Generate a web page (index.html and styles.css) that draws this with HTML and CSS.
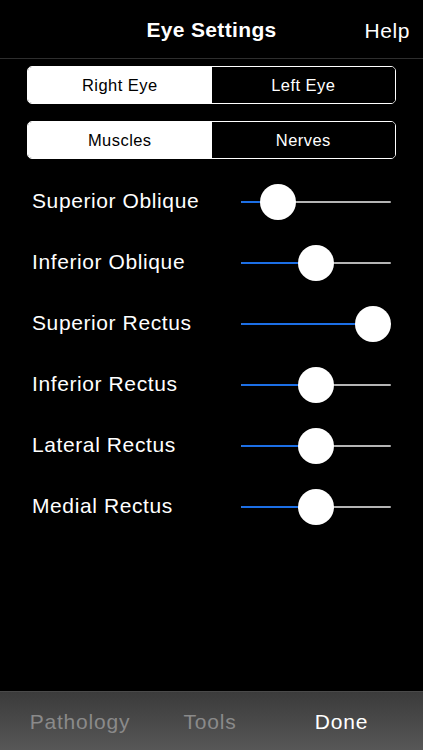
FILE: index.html
```html
<!DOCTYPE html>
<html>
<head>
<meta charset="utf-8">
<link rel="stylesheet" href="styles.css">
</head>
<body>
<div class="screen">
  <header class="navbar">
    <div class="nav-title">Eye Settings</div>
    <div class="nav-right">Help</div>
  </header>
  <main class="content">
    <div class="segmented">
      <div class="seg selected">Right Eye</div>
      <div class="seg">Left Eye</div>
    </div>
    <div class="segmented">
      <div class="seg selected">Muscles</div>
      <div class="seg">Nerves</div>
    </div>
    <div class="rows">
      <div class="row">
        <div class="label">Superior Oblique</div>
        <div class="slider" style="--v:0.167"><div class="fill"></div><div class="thumb"></div></div>
      </div>
      <div class="row">
        <div class="label">Inferior Oblique</div>
        <div class="slider" style="--v:0.5"><div class="fill"></div><div class="thumb"></div></div>
      </div>
      <div class="row">
        <div class="label">Superior Rectus</div>
        <div class="slider" style="--v:1"><div class="fill"></div><div class="thumb"></div></div>
      </div>
      <div class="row">
        <div class="label">Inferior Rectus</div>
        <div class="slider" style="--v:0.5"><div class="fill"></div><div class="thumb"></div></div>
      </div>
      <div class="row">
        <div class="label">Lateral Rectus</div>
        <div class="slider" style="--v:0.5"><div class="fill"></div><div class="thumb"></div></div>
      </div>
      <div class="row">
        <div class="label">Medial Rectus</div>
        <div class="slider" style="--v:0.5"><div class="fill"></div><div class="thumb"></div></div>
      </div>
    </div>
  </main>
  <footer class="tabbar">
    <div class="tab dim">Pathology</div>
    <div class="tab dim">Tools</div>
    <div class="tab active">Done</div>
  </footer>
</div>
</body>
</html>
```

FILE: styles.css
```css
html, body {
  margin: 0;
  padding: 0;
  background: #000;
}
body {
  font-family: "Liberation Sans", Arial, sans-serif;
  color: #fff;
}
.screen {
  width: 423px;
  height: 750px;
  display: flex;
  flex-direction: column;
  background: #000;
  overflow: hidden;
}
.navbar {
  height: 58px;
  flex: none;
  position: relative;
  display: flex;
  align-items: center;
  justify-content: center;
  border-bottom: 1px solid #2e2e2e;
}
.nav-title {
  font-size: 21px;
  font-weight: bold;
  letter-spacing: 0.35px;
  padding-top: 2px;
}
.nav-right {
  position: absolute;
  right: 13px;
  top: 0;
  height: 58px;
  display: flex;
  align-items: center;
  padding-top: 2px;
  font-size: 21px;
  letter-spacing: 0.6px;
}
.content {
  flex: 1;
  padding-top: 7px;
}
.segmented {
  display: flex;
  margin: 0 27px 17px 27px;
  height: 38px;
  box-sizing: border-box;
  border: 1.5px solid #fff;
  border-radius: 5px;
  overflow: hidden;
}
.seg {
  flex: 1;
  display: flex;
  align-items: center;
  justify-content: center;
  font-size: 16.5px;
  letter-spacing: 0.45px;
  color: #fff;
  background: #000;
}
.seg.selected {
  background: #fff;
  color: #000;
}
.rows {
  margin-top: -5px;
}
.row {
  height: 61px;
  display: flex;
  align-items: center;
  padding-left: 32px;
}
.label {
  width: 209px;
  font-size: 21px;
  letter-spacing: 0.6px;
  color: #fff;
  padding-bottom: 2px;
}
.slider {
  position: relative;
  width: 150px;
  height: 2px;
  background: #b4b4b4;
  border-radius: 1px;
}
.fill {
  height: 2px;
  width: calc(18px + var(--v) * 114px);
  background: #1c6fe6;
  border-radius: 1px;
}
.thumb {
  position: absolute;
  top: -17px;
  left: calc(var(--v) * 114px);
  width: 36px;
  height: 36px;
  border-radius: 50%;
  background: #fff;
  box-shadow: 0 1px 2px rgba(0,0,0,0.3);
}
.tabbar {
  height: 59px;
  flex: none;
  display: flex;
  align-items: center;
  background: linear-gradient(#3b3b3b, #575757);
  border-top: 1px solid #4a4a4a;
  box-sizing: border-box;
}
.tab {
  font-size: 21px;
  letter-spacing: 0.8px;
  text-align: center;
  padding-top: 1px;
}
.tab:nth-child(1) { width: 160px; }
.tab:nth-child(2) { width: 100px; }
.tab:nth-child(3) { width: 163px; }
.tab.dim { color: #8a8a8a; }
.tab.active { color: #fff; }
```
